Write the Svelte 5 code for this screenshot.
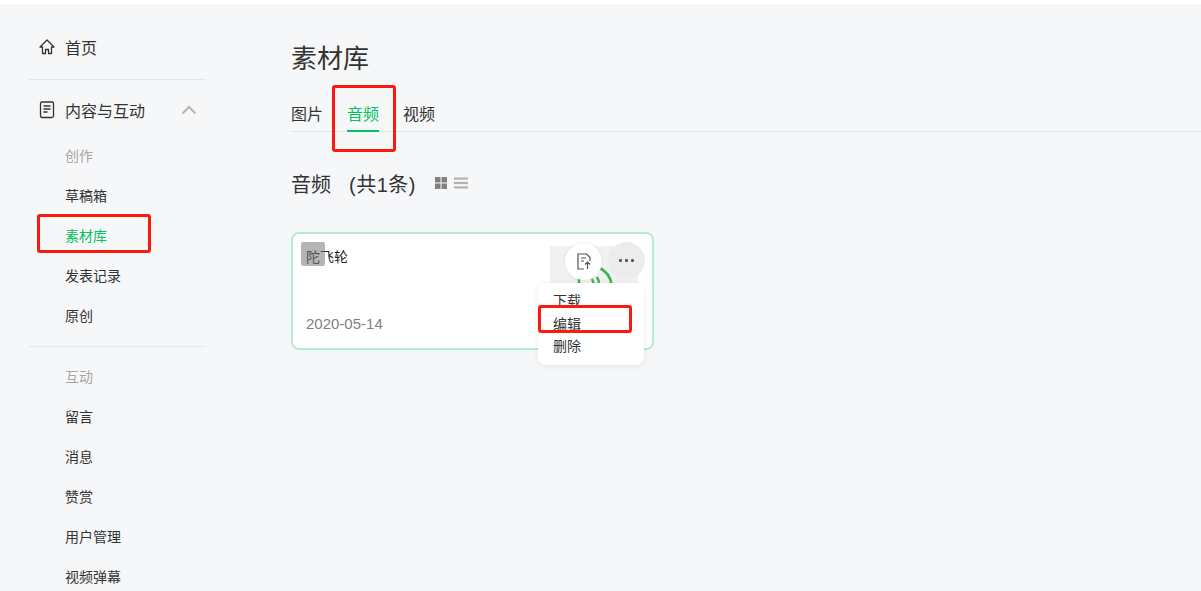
<script>
	const creation = ["草稿箱", "素材库", "发表记录", "原创"];
	const interact = ["留言", "消息", "赞赏", "用户管理", "视频弹幕"];
	const tabs = ["图片", "音频", "视频"];
	const menu = ["下载", "编辑", "删除"];
</script>

<div class="page">
	<aside class="side">
		<a class="top" href="#home">
			<svg width="16" height="16" viewBox="0 0 16 16" fill="none" stroke="#333" stroke-width="1.3" stroke-linejoin="round">
				<path d="M8 1 1 8H3.5V14.5H6.5V10.5H9.5V14.5H12.5V8H15Z" />
			</svg>
			<span>首页</span>
		</a>
		<div class="rule first"></div>
		<div class="top group">
			<svg width="16" height="18" viewBox="0 0 16 18" fill="none" stroke="#333" stroke-width="1.3">
				<rect x="1.5" y="1" width="13" height="15.5" rx="1.5" />
				<path d="M4.5 5H11.5M4.5 8H11.5M4.5 11H8.5" />
			</svg>
			<span>内容与互动</span>
			<svg class="chev" width="16" height="10" viewBox="0 0 16 10" fill="none" stroke="#b5b5b5" stroke-width="2">
				<path d="M1.5 8.5 8 2 14.5 8.5" />
			</svg>
		</div>
		<div class="label">创作</div>
		{#each creation as item}
			<a class="item" class:on={item === "素材库"} href="#item">{item}</a>
		{/each}
		<div class="rule second"></div>
		<div class="label">互动</div>
		{#each interact as item}
			<a class="item" href="#item">{item}</a>
		{/each}
		<div class="mark mark-side"></div>
	</aside>

	<main class="main">
		<h1>素材库</h1>
		<nav class="tabs">
			{#each tabs as tab}
				<a class="tab" class:active={tab === "音频"} href="#tab">{tab}</a>
			{/each}
			<div class="mark mark-tab"></div>
		</nav>
		<div class="head">
			<h2>音频<span class="count">(共1条)</span></h2>
			<svg class="view" width="12" height="12" viewBox="0 0 12 12" fill="#808080">
				<rect width="5.5" height="5.5" />
				<rect x="6.5" width="5.5" height="5.5" />
				<rect y="6.5" width="5.5" height="5.5" />
				<rect x="6.5" y="6.5" width="5.5" height="5.5" />
			</svg>
			<svg class="view" width="14" height="12" viewBox="0 0 14 12" fill="#b2b2b2">
				<rect y="0.5" width="14" height="2.2" />
				<rect y="4.9" width="14" height="2.2" />
				<rect y="9.3" width="14" height="2.2" />
			</svg>
		</div>

		<div class="card">
			<div class="title"><span class="redact"></span>陀飞轮</div>
			<div class="date">2020-05-14</div>
			<div class="cover">
				<svg width="88" height="60" viewBox="0 0 88 60" fill="none" stroke="#3bb54a" stroke-width="2.5">
					<path d="M29 32V46M48 21A24 24 0 0 1 62 40M42 33Q45 39 43 46M47 31Q51 38 48 46" />
				</svg>
			</div>
			<button class="round upload" aria-label="上传">
				<svg width="14" height="17" viewBox="0 0 14 17" fill="none" stroke="#555" stroke-width="1.2">
					<path d="M7 16H1V1H9.5L13 4.5V8M4 5H9M4 8H7M10.5 16V9M8 11.5 10.5 9 13 11.5" />
				</svg>
			</button>
			<button class="round more" aria-label="更多">
				<i></i><i></i><i></i>
			</button>
			<ul class="menu">
				{#each menu as entry}
					<li>{entry}</li>
				{/each}
			</ul>
			<div class="mark mark-menu"></div>
		</div>
	</main>
</div>

<style>
	:global(body) {
		margin: 0;
		background: #f6f7f9;
	}

	.page {
		display: flex;
		height: 587px;
		border-top: 4px solid #fff;
		overflow: hidden;
		background: #f6f7f9;
		font-family: "Liberation Sans", "Noto Sans CJK SC", sans-serif;
		color: #333;
	}

	.side {
		position: relative;
		box-sizing: border-box;
		width: 291px;
		flex: none;
		padding: 23px 0 0 29px;
	}

	a {
		color: inherit;
		text-decoration: none;
	}

	.top {
		display: flex;
		align-items: center;
		gap: 10px;
		width: 177px;
		height: 40px;
		padding-left: 10px;
		box-sizing: border-box;
		font-size: 16px;
	}

	.group {
		height: 24px;
		margin-top: 18px;
	}

	.chev {
		margin-left: auto;
		margin-right: 9px;
	}

	.rule {
		width: 177px;
		height: 1px;
		background: #e4e6e9;
	}

	.first {
		margin-top: 12px;
	}

	.second {
		margin-top: 10px;
		margin-bottom: 10px;
	}

	.label,
	.item {
		display: block;
		height: 40px;
		line-height: 40px;
		padding-left: 36px;
		font-size: 14px;
	}

	.label {
		color: #a6a6a6;
	}

	.group + .label {
		margin-top: 14px;
	}

	.on {
		color: #07c160;
	}

	.main {
		flex: 1;
		min-width: 0;
	}

	h1 {
		margin: 37px 0 0;
		font-size: 26px;
		font-weight: 400;
		line-height: 36px;
	}

	.tabs {
		position: relative;
		display: flex;
		gap: 24px;
		margin-top: 15px;
		height: 39px;
		border-bottom: 1px solid #e4e6e9;
	}

	.tab {
		height: 40px;
		padding-top: 12px;
		box-sizing: border-box;
		line-height: 22px;
		font-size: 16px;
	}

	.active {
		color: #07c160;
		border-bottom: 2px solid #07c160;
	}

	.head {
		display: flex;
		align-items: center;
		margin-top: 35px;
		height: 32px;
	}

	h2 {
		margin: 0 19px 0 0;
		font-size: 20px;
		font-weight: 400;
	}

	.count {
		margin-left: 18px;
		letter-spacing: 0.5px;
	}

	.view {
		margin-right: 7px;
	}

	.card {
		position: relative;
		box-sizing: border-box;
		width: 363px;
		height: 118px;
		margin-top: 33px;
		background: #fff;
		border: 2px solid #b5ecca;
		border-radius: 8px;
	}

	.title {
		position: relative;
		margin: 13px 0 0 13px;
		font-size: 14px;
		line-height: 20px;
		color: #222;
	}

	.redact {
		position: absolute;
		left: -5px;
		top: -5px;
		width: 24px;
		height: 24px;
		border-radius: 2px;
		background: rgba(120, 120, 120, 0.55);
	}

	.date {
		position: absolute;
		left: 13px;
		bottom: 16px;
		font-size: 15px;
		color: #7f7f7f;
	}

	.cover {
		position: absolute;
		right: 14px;
		top: 12px;
		width: 88px;
		height: 60px;
		background: #f1f1f1;
	}

	.cover svg {
		display: block;
	}

	.round {
		position: absolute;
		top: 8px;
		width: 37px;
		height: 37px;
		padding: 0;
		border: 0;
		border-radius: 50%;
		display: flex;
		align-items: center;
		justify-content: center;
		gap: 3.5px;
	}

	.upload {
		left: 272px;
		top: 9px;
		background: #fff;
		box-shadow: 0 0 3px rgba(0, 0, 0, 0.1);
	}

	.more {
		left: 315px;
		background: #ececec;
	}

	.more i {
		width: 2.5px;
		height: 2.5px;
		border-radius: 50%;
		background: #555;
	}

	.menu {
		position: absolute;
		left: 245px;
		top: 49px;
		width: 106px;
		height: 82px;
		margin: 0;
		padding: 7px 0 0 15px;
		box-sizing: border-box;
		list-style: none;
		background: #fff;
		border-radius: 8px;
		box-shadow: 0 1px 6px rgba(0, 0, 0, 0.08);
		font-size: 14px;
		line-height: 22.5px;
	}

	.mark {
		position: absolute;
		box-sizing: border-box;
		border: 3px solid #fb1a12;
		border-radius: 3px;
	}

	.mark-side {
		left: 37px;
		top: 210px;
		width: 114px;
		height: 39px;
	}

	.mark-tab {
		left: 41px;
		top: -7px;
		width: 64px;
		height: 67px;
	}

	.mark-menu {
		left: 245px;
		top: 71px;
		width: 94px;
		height: 28px;
	}
</style>
